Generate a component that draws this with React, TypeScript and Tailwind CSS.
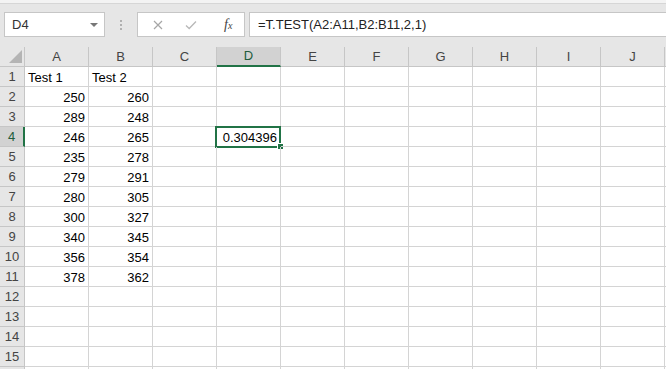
const COLS = ['A', 'B', 'C', 'D', 'E', 'F', 'G', 'H', 'I', 'J'];

const DATA: Record<number, (string | number)[]> = {
  1: ['Test 1', 'Test 2'],
  2: [250, 260],
  3: [289, 248],
  4: [246, 265, '', 0.304396],
  5: [235, 278],
  6: [279, 291],
  7: [280, 305],
  8: [300, 327],
  9: [340, 345],
  10: [356, 354],
  11: [378, 362],
};

const ROWS = Array.from({ length: 16 }, (_, i) => i + 1);

function Toolbar() {
  return (
    <div className="h-[47px] bg-[#e6e6e6] flex flex-col">
      <div className="h-[4px] bg-[#f3f3f3] border-b border-[#d6d6d6]" />
      <div className="flex items-center mt-[8px] h-[25px]">
        {/* name box */}
        <div className="ml-[4px] w-[101px] h-full bg-white border border-[#c6c6c6] flex items-center justify-between pl-[7px] pr-[6px]">
          <span className="text-[13px] text-[#333] font-['Liberation_Sans',sans-serif]">D4</span>
          <span className="w-0 h-0 border-l-[4px] border-r-[4px] border-t-[4px] border-l-transparent border-r-transparent border-t-[#777]" />
        </div>
        {/* grip dots */}
        <div className="w-[32px] flex flex-col items-center gap-[2px]">
          <span className="w-[2px] h-[2px] bg-[#b0b0b0]" />
          <span className="w-[2px] h-[2px] bg-[#b0b0b0]" />
          <span className="w-[2px] h-[2px] bg-[#b0b0b0]" />
        </div>
        {/* cancel / enter / fx */}
        <div className="w-[108px] h-full bg-white border border-[#c6c6c6] flex items-center">
          <svg width="10" height="10" viewBox="0 0 10 10" className="ml-[15px]">
            <path d="M1 1L9 9M9 1L1 9" stroke="#a6a6a6" strokeWidth="1.2" />
          </svg>
          <svg width="12" height="10" viewBox="0 0 12 10" className="ml-[22px]">
            <path d="M1 5.5L4.2 8.5L11 1.5" stroke="#b8b8b8" strokeWidth="1.3" fill="none" />
          </svg>
          <span className="ml-[27px] italic text-[14px] text-[#444] font-['Liberation_Serif',serif] leading-none">
            f<span className="text-[10px]">x</span>
          </span>
        </div>
        {/* formula bar */}
        <div className="ml-[4px] flex-1 h-full bg-white border-y border-l border-[#c6c6c6] flex items-center pl-[8px]">
          <span className="text-[13px] text-[#222] font-['Liberation_Sans',sans-serif]">
            =T.TEST(A2:A11,B2:B11,2,1)
          </span>
        </div>
      </div>
    </div>
  );
}

export default function App() {
  return (
    <div className="w-[666px] h-[369px] overflow-hidden bg-white">
      <Toolbar />
      <div className="grid grid-cols-[25px_repeat(10,64px)_1fr] font-['Liberation_Sans',sans-serif]">
        {/* header row: select-all corner */}
        <div className="h-[20px] bg-[#e6e6e6] border-r border-b border-[#c6c6c6] flex items-end justify-end pr-[2px] pb-[3px]">
          <div className="w-[13px] h-[13px] shrink-0 bg-[#b4b4b4] [clip-path:polygon(100%_0,100%_100%,0_100%)]" />
        </div>
        {COLS.map((c) => (
          <div
            key={c}
            className={
              c === 'D'
                ? 'h-[20px] bg-[#d2d2d2] border-b-2 border-[#217346] border-r border-r-[#c6c6c6] flex items-center justify-center text-[13px] text-[#215c3c]'
                : 'h-[20px] bg-[#e6e6e6] border-b border-r border-[#c6c6c6] flex items-center justify-center text-[13px] text-[#444]'
            }
          >
            {c}
          </div>
        ))}
        <div className="h-[20px] bg-[#e6e6e6] border-b border-[#c6c6c6]" />

        {ROWS.map((r) => (
          <RowCells key={r} r={r} />
        ))}
      </div>
    </div>
  );
}

function RowCells({ r }: { r: number }) {
  const vals = DATA[r] ?? [];
  const sel = r === 4;
  return (
    <>
      <div
        className={
          sel
            ? 'h-[20px] bg-[#d2d2d2] border-r-2 border-r-[#217346] border-b border-b-[#c6c6c6] flex items-center justify-center text-[13px] text-[#215c3c]'
            : 'h-[20px] bg-[#e6e6e6] border-r border-b border-[#c6c6c6] flex items-center justify-center text-[13px] text-[#444]'
        }
      >
        {r <= 15 ? r : null}
      </div>
      {COLS.map((c, i) => {
        const v = vals[i];
        const isNum = typeof v === 'number';
        return (
          <div
            key={c}
            className={
              'relative h-[20px] border-r border-b border-[#d4d4d4] flex items-center px-[3px] pt-[2px] text-[13px] text-black ' +
              (isNum ? 'justify-end' : 'justify-start')
            }
          >
            {v !== undefined && v !== '' ? v : null}
            {sel && c === 'D' && (
              <>
                <div className="absolute -left-[2px] -top-[1px] w-[66px] h-[22px] border-2 border-[#217346]" />
                <div className="absolute -right-[4px] -bottom-[4px] w-[7px] h-[7px] bg-[#217346] border border-white" />
              </>
            )}
          </div>
        );
      })}
      <div className="h-[20px] border-b border-[#d4d4d4]" />
    </>
  );
}
